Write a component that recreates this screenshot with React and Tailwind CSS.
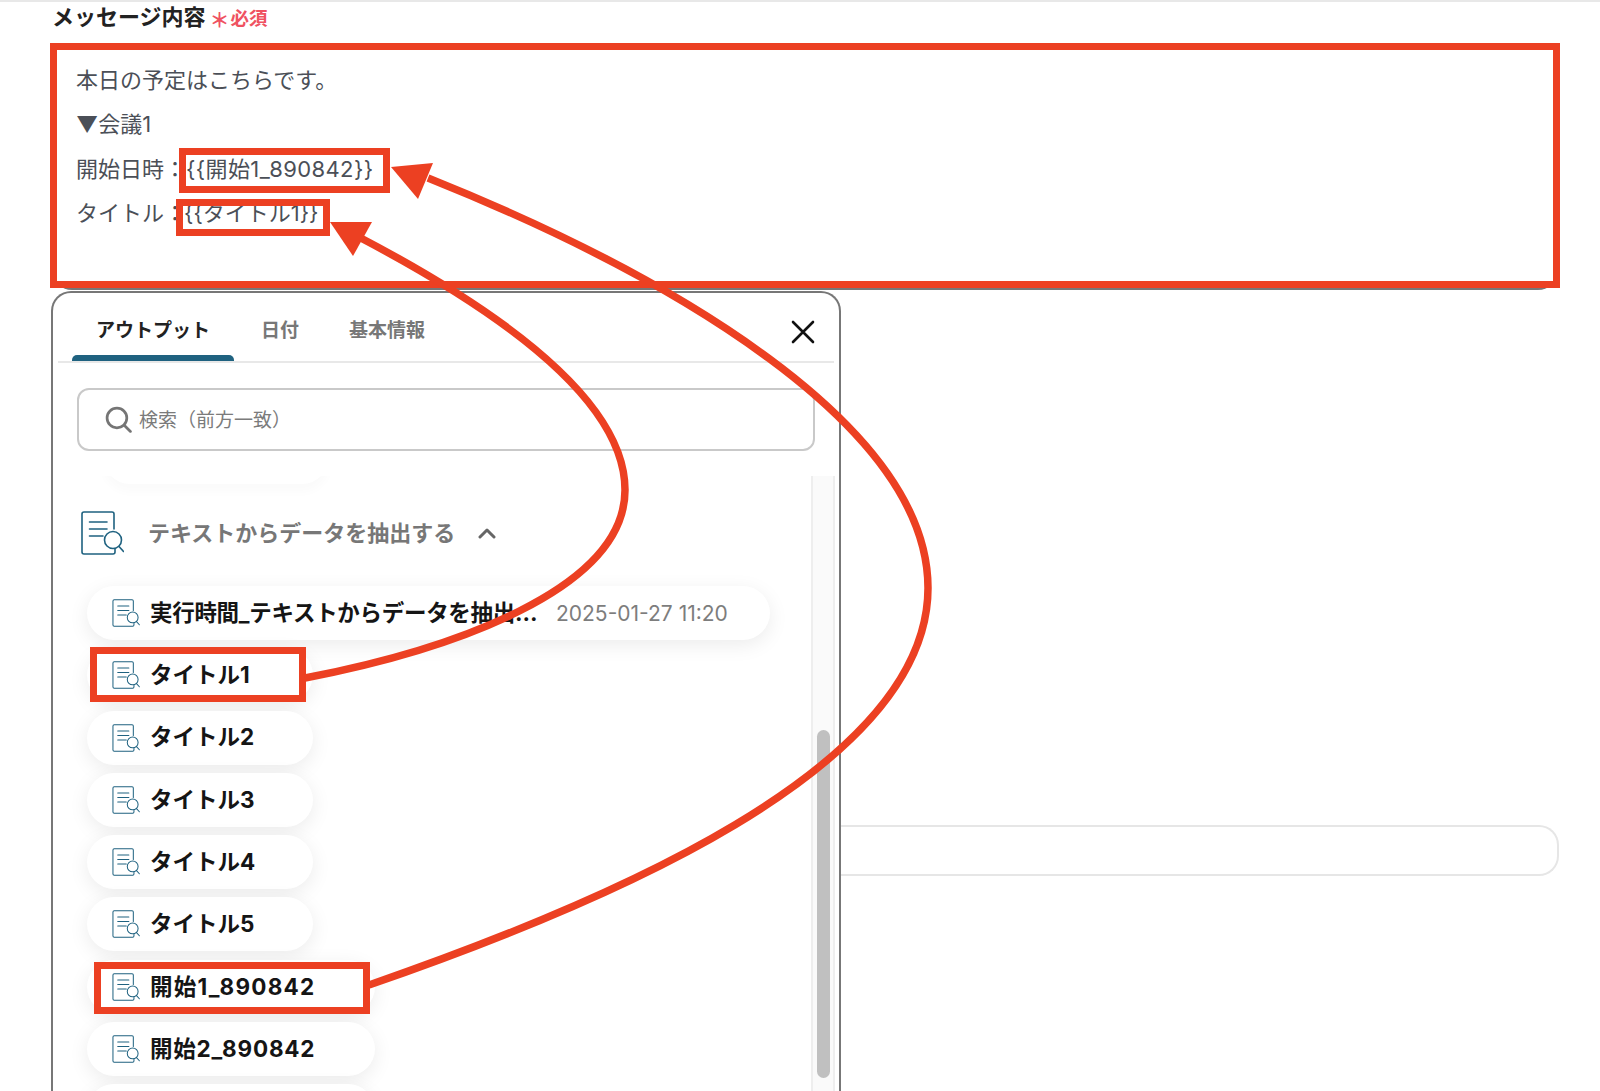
import React from "react";

const FONT = { fontFamily: 'Inter, "Noto Sans CJK JP", "Noto Sans", sans-serif' };

function DocIcon({ className }) {
  return (
    <svg viewBox="0 0 43 44" fill="none" stroke="#1f6280" strokeWidth="1.6" strokeLinecap="round" strokeLinejoin="round" className={className}>
      <path d="M33 18V3a2 2 0 0 0-2-2H3a2 2 0 0 0-2 2v38a2 2 0 0 0 2 2h29a2 2 0 0 0 2-2v-3" />
      <path d="M8.5 11H26M8.5 18H26M8.5 25H22" />
      <circle cx="32" cy="29" r="8.5" fill="#fff" />
      <path d="M38 35.5l4.5 5" />
    </svg>
  );
}

function Chip({ label, width, tracking = "" }) {
  return (
    <div className={`flex h-[54px] shrink-0 items-center gap-[10px] rounded-full bg-white pl-[25px] shadow-[0_5px_20px_rgba(0,0,0,0.08)] ${width}`}>
      <DocIcon className="h-[28px] w-[28px] shrink-0" />
      <span className={`text-[22.5px] font-bold leading-none text-[#151515] ${tracking}`}>{label}</span>
    </div>
  );
}

function Annotation({ className }) {
  return <div className={`absolute border-[7px] border-[#ec4022] ${className}`} />;
}

export default function App() {
  return (
    <div style={FONT} className="relative h-[1091px] w-[1600px] overflow-hidden border-t-2 border-[#e8e8e8] bg-white">
      <div className="flex h-[40px] items-start pl-[52px] pt-[1px]">
        <span className="text-[22px] font-bold leading-[28px] text-[#222]">メッセージ内容</span>
        <span className="ml-[4px] mt-[4px] w-[18px] text-[20px] font-bold leading-[28px] text-[#ef5261]">＊</span>
        <span className="ml-[3px] mt-[1px] text-[18.5px] font-bold leading-[28px] text-[#ef5261]">必須</span>
      </div>

      <div className="ml-[52px] mr-[42px] h-[248px] rounded-b-[20px] border-b-2 border-[#777] pl-[24px] pt-[16px] text-[22px] leading-[44.3px] text-[#4b4f57]">
        <p>本日の予定はこちらです。</p>
        <p>▼会議1</p>
        <p>開始日時：<span className="tracking-[0.4px]">{"{{開始1_890842}}"}</span></p>
        <p>タイトル：<span className="ml-[-2px]">{"{{タイトル1}}"}</span></p>
      </div>

      <div className="mt-[1px] flex items-start">
        <div className="ml-[51px] h-[900px] w-[790px] shrink-0 rounded-t-[20px] border-2 border-b-0 border-[#777] bg-white">
          <div className="mx-[5px] flex h-[70px] items-end border-b-2 border-[#e8e8e8] pl-[14px]">
            <div className="flex h-full w-[162px] flex-col items-center justify-end">
              <span className="mb-[12px] text-[19px] font-bold leading-[24px] text-[#222]">アウトプット</span>
              <span className="h-[6px] w-full rounded-t-[5px] bg-[#1f6280]" />
            </div>
            <span className="mb-[18px] ml-[27px] text-[19px] font-bold leading-[24px] text-[#777]">日付</span>
            <span className="mb-[18px] ml-[50px] text-[19px] font-bold leading-[24px] text-[#777]">基本情報</span>
            <svg viewBox="0 0 24 24" fill="none" stroke="#111" strokeWidth="2.6" strokeLinecap="round" className="mb-[17px] ml-auto mr-[19px] h-[24px] w-[24px]">
              <path d="M2 2l20 20M22 2L2 22" />
            </svg>
          </div>

          <div className="mx-[24px] mt-[25px] flex h-[63px] items-center rounded-[12px] border-2 border-[#c9c9c9] pl-[26px]">
            <svg viewBox="0 0 26 26" fill="none" stroke="#757575" strokeWidth="2.6" strokeLinecap="round" className="h-[27px] w-[27px]">
              <circle cx="11.5" cy="11.5" r="9.5" />
              <path d="M18.5 18.5l6 6" />
            </svg>
            <span className="ml-[7px] mt-[2px] text-[19px] leading-none text-[#7b7b7b]">検索（前方一致）</span>
          </div>

          <div className="mt-[25px] flex h-[700px]">
            <div className="min-w-0 flex-1 overflow-hidden">
              <div className="ml-[50px] mt-[-46px] h-[54px] w-[226px] rounded-full bg-white shadow-[0_8px_10px_rgba(0,0,0,0.02)]" />
              <div className="ml-[28px] mt-[27px] flex h-[44px] items-center">
                <DocIcon className="h-[44px] w-[43px] shrink-0" />
                <span className="ml-[24px] text-[22px] font-bold leading-none text-[#777]">テキストからデータを抽出する</span>
                <svg viewBox="0 0 18 11" fill="none" stroke="#666" strokeWidth="3" strokeLinecap="round" strokeLinejoin="round" className="ml-[23px] h-[11px] w-[18px]">
                  <path d="M2 9l7-7 7 7" />
                </svg>
              </div>
              <div className="ml-[34px] mt-[31px] flex flex-col gap-[8.3px] pb-[30px]">
                <div className="flex h-[54px] w-[683px] shrink-0 items-center rounded-full bg-white pl-[25px] shadow-[0_5px_20px_rgba(0,0,0,0.08)]">
                  <DocIcon className="h-[28px] w-[28px] shrink-0" />
                  <span className="ml-[10px] w-[386px] whitespace-nowrap text-[22.5px] font-bold leading-[30px] tracking-[-0.3px] text-[#151515]">実行時間_テキストからデータを抽出…</span>
                  <span className="ml-[20px] whitespace-nowrap text-[21px] leading-none text-[#7d7d7d]">2025-01-27 11:20</span>
                </div>
                <Chip label="タイトル1" width="w-[226px]" />
                <Chip label="タイトル2" width="w-[226px]" />
                <Chip label="タイトル3" width="w-[226px]" />
                <Chip label="タイトル4" width="w-[226px]" />
                <Chip label="タイトル5" width="w-[226px]" />
                <Chip label="開始1_890842" width="w-[288px]" tracking="tracking-[1.2px]" />
                <Chip label="開始2_890842" width="w-[288px]" tracking="tracking-[0.8px]" />
                <div className="h-[54px] w-[288px] shrink-0 rounded-full bg-white shadow-[0_5px_20px_rgba(0,0,0,0.08)]" />
              </div>
            </div>
            <div className="mr-[4px] h-full w-[24px] shrink-0 border-x-2 border-[#eeeeee] bg-[#fafafa] pl-[4px] pt-[254px]">
              <div className="h-[348px] w-[13px] rounded-full bg-[#c0c0c0]" />
            </div>
          </div>
        </div>

        <div className="mr-[41px] mt-[534px] h-[51px] flex-1 rounded-r-[20px] border-2 border-l-0 border-[#e6e6e6]" />
      </div>

      <Annotation className="left-[50px] top-[41px] h-[245px] w-[1510px]" />
      <Annotation className="left-[179px] top-[146px] h-[45px] w-[211px]" />
      <Annotation className="left-[176px] top-[197px] h-[37px] w-[154px]" />
      <Annotation className="left-[90px] top-[645px] h-[55px] w-[216px]" />
      <Annotation className="left-[94px] top-[960px] h-[52px] w-[276px]" />

      <svg viewBox="0 0 1600 1091" fill="none" className="pointer-events-none absolute left-0 top-[-2px] h-[1091px] w-[1600px]">
        <path d="M305 678C450 650 625 590 625 490C625 390 470 295 357 236" stroke="#ec4022" strokeWidth="7.5" />
        <path d="M369 985C600 905 928 770 928 588C928 425 670 275 428 178" stroke="#ec4022" strokeWidth="7.5" />
        <polygon points="330,222 372,222 353,256" fill="#ec4022" />
        <polygon points="391,167 433,163 418,199" fill="#ec4022" />
      </svg>
    </div>
  );
}
